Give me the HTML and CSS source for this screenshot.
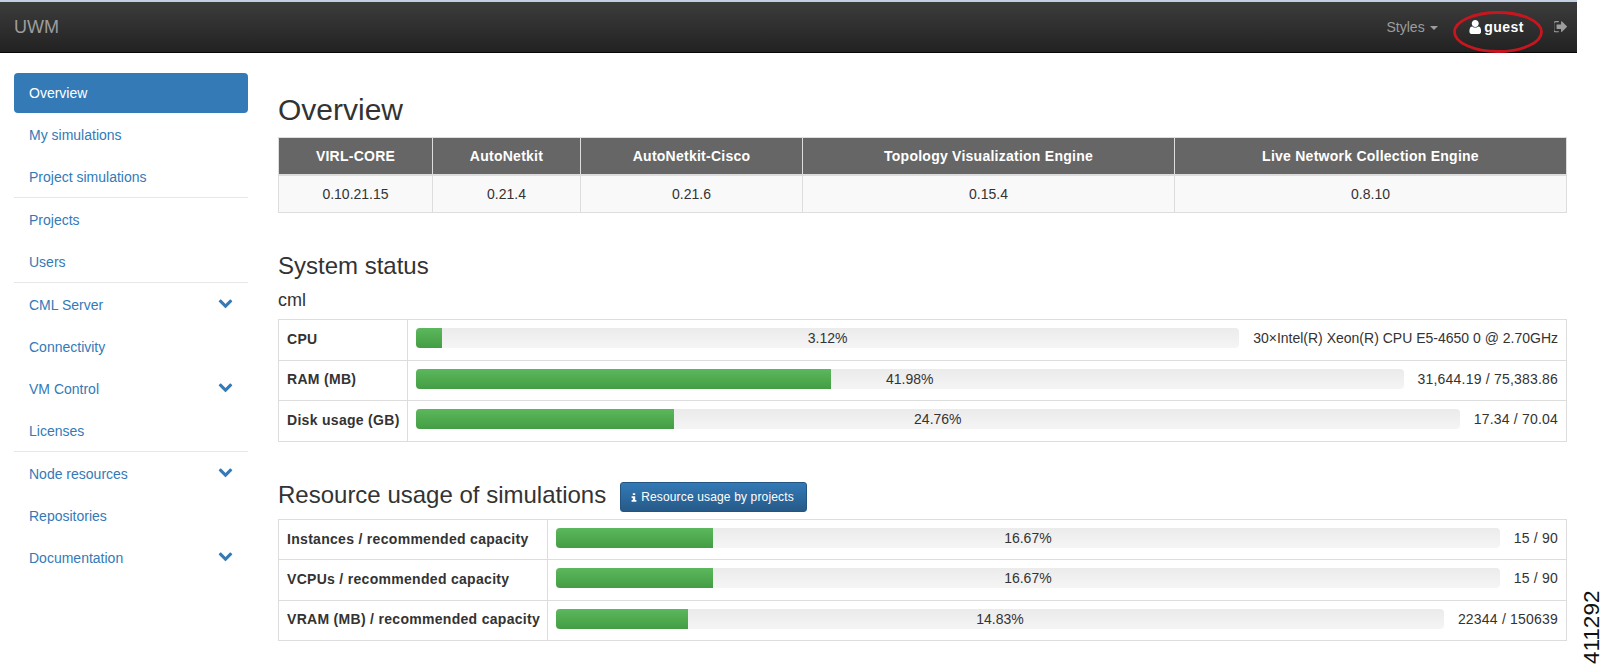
FILE: index.html
```html
<!DOCTYPE html>
<html lang="en">
<head>
<meta charset="utf-8">
<title>UWM</title>
<link rel="stylesheet" href="styles.css">
</head>
<body>
<div class="page">
  <header class="navbar">
    <a class="brand">UWM</a>
    <div class="nav-right">
      <a class="styles-link">Styles<span class="caret"></span></a>
      <a class="user-link">
        <svg class="ico-user" viewBox="256 128 1280 1536"><path d="M1536 1399q0 109-62.5 187t-150.5 78h-854q-88 0-150.5-78t-62.5-187q0-85 8.5-160.5t31.5-152 58.5-131 94-89 134.5-34.5q131 128 313 128t313-128q76 0 134.5 34.5t94 89 58.5 131 31.5 152 8.5 160.5zm-256-887q0 159-112.5 271.5t-271.5 112.5-271.5-112.5-112.5-271.5 112.5-271.5 271.5-112.5 271.5 112.5 112.5 271.5z"/></svg>
        <b>guest</b>
        <svg class="ellipse" viewBox="0 0 90 42"><ellipse cx="45" cy="21" rx="43.5" ry="19.5"/></svg>
      </a>
      <a class="logout">
        <svg class="ico-out" viewBox="160 256 1472 1280"><path d="M704 1440q0 4 1 20t.5 26.5-3 23.5-10 19.5-20.5 6.5h-320q-119 0-203.5-84.5t-84.5-203.5v-704q0-119 84.5-203.5t203.5-84.5h320q13 0 22.5 9.5t9.5 22.5q0 4 1 20t.5 26.5-3 23.5-10 19.5-20.5 6.5h-320q-66 0-113 47t-47 113v704q0 66 47 113t113 47h312l11.5 1 11.5 3 8 5.5 7 9 2 13.5zm928-544q0 26-19 45l-544 544q-19 19-45 19t-45-19-19-45v-288h-448q-26 0-45-19t-19-45v-384q0-26 19-45t45-19h448v-288q0-26 19-45t45-19 45 19l544 544q19 19 19 45z"/></svg>
      </a>
    </div>
  </header>

  <div class="layout">
    <nav class="sidebar">
      <ul class="group">
        <li><a class="item active">Overview</a></li>
        <li><a class="item">My simulations</a></li>
        <li><a class="item">Project simulations</a></li>
      </ul>
      <ul class="group">
        <li><a class="item">Projects</a></li>
        <li><a class="item">Users</a></li>
      </ul>
      <ul class="group">
        <li><a class="item">CML Server<svg class="chev" viewBox="0 0 1792 1792"><path d="M1683 808l-742 741q-19 19-45 19t-45-19l-742-741q-19-19-19-45.5t19-45.5l166-165q19-19 45-19t45 19l531 531 531-531q19-19 45-19t45 19l166 165q19 19 19 45.5t-19 45.5z"/></svg></a></li>
        <li><a class="item">Connectivity</a></li>
        <li><a class="item">VM Control<svg class="chev" viewBox="0 0 1792 1792"><path d="M1683 808l-742 741q-19 19-45 19t-45-19l-742-741q-19-19-19-45.5t19-45.5l166-165q19-19 45-19t45 19l531 531 531-531q19-19 45-19t45 19l166 165q19 19 19 45.5t-19 45.5z"/></svg></a></li>
        <li><a class="item">Licenses</a></li>
      </ul>
      <ul class="group last">
        <li><a class="item">Node resources<svg class="chev" viewBox="0 0 1792 1792"><path d="M1683 808l-742 741q-19 19-45 19t-45-19l-742-741q-19-19-19-45.5t19-45.5l166-165q19-19 45-19t45 19l531 531 531-531q19-19 45-19t45 19l166 165q19 19 19 45.5t-19 45.5z"/></svg></a></li>
        <li><a class="item">Repositories</a></li>
        <li><a class="item">Documentation<svg class="chev" viewBox="0 0 1792 1792"><path d="M1683 808l-742 741q-19 19-45 19t-45-19l-742-741q-19-19-19-45.5t19-45.5l166-165q19-19 45-19t45 19l531 531 531-531q19-19 45-19t45 19l166 165q19 19 19 45.5t-19 45.5z"/></svg></a></li>
      </ul>
    </nav>

    <main class="content">
      <h1>Overview</h1>
      <table class="versions">
        <thead>
          <tr>
            <th class="c1">VIRL-CORE</th>
            <th class="c2">AutoNetkit</th>
            <th class="c3">AutoNetkit-Cisco</th>
            <th class="c4">Topology Visualization Engine</th>
            <th>Live Network Collection Engine</th>
          </tr>
        </thead>
        <tbody>
          <tr><td>0.10.21.15</td><td>0.21.4</td><td>0.21.6</td><td>0.15.4</td><td>0.8.10</td></tr>
        </tbody>
      </table>

      <h2 class="status-title">System status</h2>
      <h3>cml</h3>
      <div class="usage usage-sys">
        <div class="row">
          <div class="label">CPU</div>
          <div class="cell">
            <div class="bar"><div class="fill" style="width:3.12%"></div><span class="pct">3.12%</span></div>
            <span class="val">30×Intel(R) Xeon(R) CPU E5-4650 0 @ 2.70GHz</span>
          </div>
        </div>
        <div class="row">
          <div class="label">RAM (MB)</div>
          <div class="cell">
            <div class="bar"><div class="fill" style="width:41.98%"></div><span class="pct">41.98%</span></div>
            <span class="val num">31,644.19 / 75,383.86</span>
          </div>
        </div>
        <div class="row">
          <div class="label">Disk usage (GB)</div>
          <div class="cell">
            <div class="bar"><div class="fill" style="width:24.76%"></div><span class="pct">24.76%</span></div>
            <span class="val num">17.34 / 70.04</span>
          </div>
        </div>
      </div>

      <div class="res-head">
        <h2>Resource usage of simulations</h2>
        <a class="btn"><svg class="ico-info" viewBox="0 0 10 14"><path d="M3 0h4v3H3zM1 5h6v6h2v3H1v-3h2V8H1z"/></svg>Resource usage by projects</a>
      </div>
      <div class="usage usage-res">
        <div class="row">
          <div class="label">Instances / recommended capacity</div>
          <div class="cell">
            <div class="bar"><div class="fill" style="width:16.67%"></div><span class="pct">16.67%</span></div>
            <span class="val num">15 / 90</span>
          </div>
        </div>
        <div class="row">
          <div class="label">VCPUs / recommended capacity</div>
          <div class="cell">
            <div class="bar"><div class="fill" style="width:16.67%"></div><span class="pct">16.67%</span></div>
            <span class="val num">15 / 90</span>
          </div>
        </div>
        <div class="row">
          <div class="label">VRAM (MB) / recommended capacity</div>
          <div class="cell">
            <div class="bar"><div class="fill" style="width:14.83%"></div><span class="pct">14.83%</span></div>
            <span class="val num">22344 / 150639</span>
          </div>
        </div>
      </div>
    </main>
  </div>
</div>
<div class="figure-id">411292</div>
</body>
</html>
```
FILE: styles.css
```css
* { box-sizing: border-box; }
html, body { margin: 0; padding: 0; background: #fff; }
body {
  font-family: "Liberation Sans", Arial, sans-serif;
  font-size: 14px;
  line-height: 20px;
  color: #333;
  overflow: hidden;
  height: 668px;
}
.page { width: 1577px; }

.navbar {
  height: 53px;
  display: flex;
  align-items: center;
  justify-content: space-between;
  padding: 0 10px 0 14px;
  border-top: 2px solid #c3d0e4;
  border-bottom: 1px solid #080808;
  background: linear-gradient(to bottom, #3c3c3c, #222);
}
.brand { font-size: 18px; color: #9d9d9d; }
.nav-right { display: flex; align-items: center; }
.styles-link { color: #9d9d9d; display: flex; align-items: center; }
.caret {
  margin-left: 5px;
  margin-top: 2px;
  border-top: 4px solid #9d9d9d;
  border-left: 4px solid transparent;
  border-right: 4px solid transparent;
}
.user-link {
  position: relative;
  display: flex;
  align-items: center;
  margin-left: 31px;
  color: #fff;
  font-size: 14px;
  letter-spacing: 0.5px;
}
.user-link b { margin-left: 3px; }
.ico-user { width: 12.5px; height: 14px; fill: #fff; }
.ellipse {
  position: absolute;
  left: -16px;
  top: -6px;
  width: 90px;
  height: 42px;
  fill: none;
  stroke: #c8161f;
  stroke-width: 2.8;
}
.logout { margin-left: 30px; display: flex; }
.ico-out { width: 13px; height: 11.3px; fill: #9d9d9d; }

.layout { display: flex; align-items: flex-start; padding-right: 10px; }
.sidebar { width: 234px; margin: 18px 0 0 14px; flex: none; }
.group {
  list-style: none;
  margin: 0;
  padding: 0;
  border-bottom: 1px solid #e7e7e7;
}
.group.last { border-bottom: 0; }
.group li { margin-top: 2px; }
.item {
  display: flex;
  justify-content: space-between;
  align-items: center;
  height: 40px;
  padding: 0 15px;
  color: #337ab7;
  border-radius: 4px;
}
.item.active { background: #337ab7; color: #fff; }
.chev { width: 15px; height: 15px; fill: #337ab7; margin-bottom: 5px; }

.content { flex: 1; margin-left: 30px; min-width: 0; }
h1, h2, h3 { font-weight: 500; color: #333; margin: 0; }
h1 { font-size: 30px; line-height: 33px; margin: 40px 0 11px; }
h2 { font-size: 24px; line-height: 26px; }
h3 { font-size: 18px; line-height: 20px; margin: 11px 0 9px; }
.status-title { margin-top: 40px; }

.versions {
  width: 100%;
  table-layout: fixed;
  border-collapse: collapse;
  text-align: center;
}
.versions th, .versions td { border: 1px solid #ddd; padding: 8px; }
.versions th {
  background: #666;
  color: #fff;
  font-weight: 700;
  letter-spacing: 0.25px;
  border-bottom-width: 2px;
}
.versions td { background: #f9f9f9; }
.c1 { width: 154px; }
.c2 { width: 148px; }
.c3 { width: 222px; }
.c4 { width: 372px; }

.usage { border: 1px solid #ddd; border-bottom-width: 0; }
.row {
  display: grid;
  border-bottom: 1px solid #ddd;
}
.usage-sys .row { grid-template-columns: 129px 1fr; height: 40.67px; }
.usage-res .row { grid-template-columns: 269px 1fr; height: 40.33px; }
.label {
  display: flex;
  align-items: center;
  padding: 0 8px 2px;
  font-weight: 700;
  letter-spacing: 0.3px;
  border-right: 1px solid #ddd;
  white-space: nowrap;
}
.cell {
  display: flex;
  align-items: flex-start;
  gap: 14px;
  padding: 8px 8px 0;
  min-width: 0;
}
.bar {
  position: relative;
  flex: 1;
  height: 20px;
  border-radius: 4px;
  overflow: hidden;
  background: linear-gradient(to bottom, #ebebeb, #f5f5f5);
}
.fill {
  height: 100%;
  background: linear-gradient(to bottom, #5cb85c, #449d44);
}
.pct {
  position: absolute;
  inset: 0;
  text-align: center;
  line-height: 20px;
}
.val { white-space: nowrap; }
.val.num { letter-spacing: 0.2px; }

.res-head {
  display: flex;
  align-items: center;
  gap: 14px;
  margin: 40px 0 6px;
}
.res-head h2 { margin-bottom: 5px; }
.btn {
  display: flex;
  align-items: center;
  height: 30px;
  padding: 0 12px 0 10px;
  font-size: 12px;
  letter-spacing: 0.15px;
  color: #fff;
  border: 1px solid #245580;
  border-radius: 3px;
  background: linear-gradient(to bottom, #337ab7, #265a88);
}
.ico-info { width: 6px; height: 9px; fill: #fff; margin-right: 4px; }

.figure-id {
  position: absolute;
  left: 1579px;
  top: 590px;
  height: 74px;
  font-size: 22.5px;
  line-height: 26px;
  color: #111;
  writing-mode: vertical-rl;
  transform: rotate(180deg);
}
```
